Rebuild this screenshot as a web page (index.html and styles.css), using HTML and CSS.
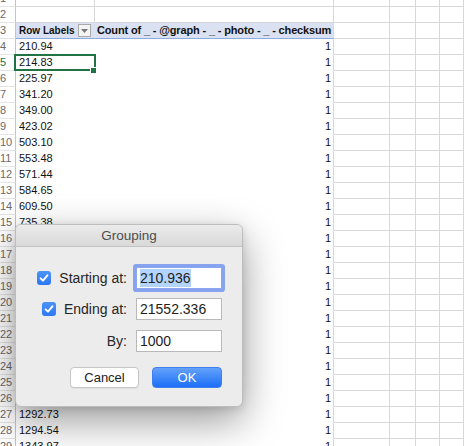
FILE: index.html
```html
<!DOCTYPE html>
<html>
<head>
<meta charset="utf-8">
<link rel="stylesheet" href="styles.css">
</head>
<body>
<div class="sheet">
  <div class="row"><div class="rh">1</div><div class="c"></div><div class="c"></div><div class="c"></div><div class="c"></div><div class="c"></div><div class="c"></div></div>
  <div class="row"><div class="rh">2</div><div class="c"></div><div class="c"></div><div class="c"></div><div class="c"></div><div class="c"></div><div class="c"></div></div>
  <div class="row"><div class="rh">3</div><div class="c ph pa"><span>Row Labels</span><span class="dd"><svg width="7" height="4" viewBox="0 0 7 4"><path d="M0 0H7L3.5 4Z" fill="#7a7a7a"/></svg></span></div><div class="c ph pb">Count of _ - @graph - _ - photo - _ - checksum</div><div class="c"></div><div class="c"></div><div class="c"></div><div class="c"></div></div>
  <div class="row"><div class="rh">4</div><div class="c pv pa">210.94</div><div class="c pv pb num">1</div><div class="c"></div><div class="c"></div><div class="c"></div><div class="c"></div></div>
  <div class="row"><div class="rh cur">5</div><div class="c pv pa sel">214.83</div><div class="c pv pb num">1</div><div class="c"></div><div class="c"></div><div class="c"></div><div class="c"></div></div>
  <div class="row"><div class="rh">6</div><div class="c pv pa">225.97</div><div class="c pv pb num">1</div><div class="c"></div><div class="c"></div><div class="c"></div><div class="c"></div></div>
  <div class="row"><div class="rh">7</div><div class="c pv pa">341.20</div><div class="c pv pb num">1</div><div class="c"></div><div class="c"></div><div class="c"></div><div class="c"></div></div>
  <div class="row"><div class="rh">8</div><div class="c pv pa">349.00</div><div class="c pv pb num">1</div><div class="c"></div><div class="c"></div><div class="c"></div><div class="c"></div></div>
  <div class="row"><div class="rh">9</div><div class="c pv pa">423.02</div><div class="c pv pb num">1</div><div class="c"></div><div class="c"></div><div class="c"></div><div class="c"></div></div>
  <div class="row"><div class="rh">10</div><div class="c pv pa">503.10</div><div class="c pv pb num">1</div><div class="c"></div><div class="c"></div><div class="c"></div><div class="c"></div></div>
  <div class="row"><div class="rh">11</div><div class="c pv pa">553.48</div><div class="c pv pb num">1</div><div class="c"></div><div class="c"></div><div class="c"></div><div class="c"></div></div>
  <div class="row"><div class="rh">12</div><div class="c pv pa">571.44</div><div class="c pv pb num">1</div><div class="c"></div><div class="c"></div><div class="c"></div><div class="c"></div></div>
  <div class="row"><div class="rh">13</div><div class="c pv pa">584.65</div><div class="c pv pb num">1</div><div class="c"></div><div class="c"></div><div class="c"></div><div class="c"></div></div>
  <div class="row"><div class="rh">14</div><div class="c pv pa">609.50</div><div class="c pv pb num">1</div><div class="c"></div><div class="c"></div><div class="c"></div><div class="c"></div></div>
  <div class="row"><div class="rh">15</div><div class="c pv pa">735.38</div><div class="c pv pb num">1</div><div class="c"></div><div class="c"></div><div class="c"></div><div class="c"></div></div>
  <div class="row"><div class="rh">16</div><div class="c pv pa">742.19</div><div class="c pv pb num">1</div><div class="c"></div><div class="c"></div><div class="c"></div><div class="c"></div></div>
  <div class="row"><div class="rh">17</div><div class="c pv pa">801.66</div><div class="c pv pb num">1</div><div class="c"></div><div class="c"></div><div class="c"></div><div class="c"></div></div>
  <div class="row"><div class="rh">18</div><div class="c pv pa">846.30</div><div class="c pv pb num">1</div><div class="c"></div><div class="c"></div><div class="c"></div><div class="c"></div></div>
  <div class="row"><div class="rh">19</div><div class="c pv pa">912.75</div><div class="c pv pb num">1</div><div class="c"></div><div class="c"></div><div class="c"></div><div class="c"></div></div>
  <div class="row"><div class="rh">20</div><div class="c pv pa">958.04</div><div class="c pv pb num">1</div><div class="c"></div><div class="c"></div><div class="c"></div><div class="c"></div></div>
  <div class="row"><div class="rh">21</div><div class="c pv pa">1003.12</div><div class="c pv pb num">1</div><div class="c"></div><div class="c"></div><div class="c"></div><div class="c"></div></div>
  <div class="row"><div class="rh">22</div><div class="c pv pa">1056.89</div><div class="c pv pb num">1</div><div class="c"></div><div class="c"></div><div class="c"></div><div class="c"></div></div>
  <div class="row"><div class="rh">23</div><div class="c pv pa">1120.47</div><div class="c pv pb num">1</div><div class="c"></div><div class="c"></div><div class="c"></div><div class="c"></div></div>
  <div class="row"><div class="rh">24</div><div class="c pv pa">1187.35</div><div class="c pv pb num">1</div><div class="c"></div><div class="c"></div><div class="c"></div><div class="c"></div></div>
  <div class="row"><div class="rh">25</div><div class="c pv pa">1215.90</div><div class="c pv pb num">1</div><div class="c"></div><div class="c"></div><div class="c"></div><div class="c"></div></div>
  <div class="row"><div class="rh">26</div><div class="c pv pa">1268.41</div><div class="c pv pb num">1</div><div class="c"></div><div class="c"></div><div class="c"></div><div class="c"></div></div>
  <div class="row"><div class="rh">27</div><div class="c pv pa">1292.73</div><div class="c pv pb num">1</div><div class="c"></div><div class="c"></div><div class="c"></div><div class="c"></div></div>
  <div class="row"><div class="rh">28</div><div class="c pv pa">1294.54</div><div class="c pv pb num">1</div><div class="c"></div><div class="c"></div><div class="c"></div><div class="c"></div></div>
  <div class="row"><div class="rh">29</div><div class="c pv pa">1343.97</div><div class="c pv pb num">1</div><div class="c"></div><div class="c"></div><div class="c"></div><div class="c"></div></div>
</div>

<div class="dialog">
  <div class="titlebar">Grouping</div>
  <div class="dbody">
    <div class="frow">
      <span class="cb"><svg width="14" height="14" viewBox="0 0 14 14"><path d="M3.6 7.3L6 9.7L10.4 4.3" fill="none" stroke="#fff" stroke-width="1.9" stroke-linecap="round" stroke-linejoin="round"/></svg></span>
      <span class="lbl">Starting at:</span>
      <div class="field focus"><span class="seltext">210.936</span></div>
    </div>
    <div class="frow r2">
      <span class="cb"><svg width="14" height="14" viewBox="0 0 14 14"><path d="M3.6 7.3L6 9.7L10.4 4.3" fill="none" stroke="#fff" stroke-width="1.9" stroke-linecap="round" stroke-linejoin="round"/></svg></span>
      <span class="lbl">Ending at:</span>
      <div class="field">21552.336</div>
    </div>
    <div class="frow r3">
      <span class="lbl">By:</span>
      <div class="field">1000</div>
    </div>
    <div class="btns">
      <div class="btn cancel">Cancel</div>
      <div class="btn ok">OK</div>
    </div>
  </div>
</div>
</body>
</html>
```
FILE: styles.css
```css
html, body {
  margin: 0;
  padding: 0;
  background: #ffffff;
}
body {
  width: 464px;
  height: 446px;
  overflow: hidden;
  position: relative;
  font-family: "Liberation Sans", Arial, sans-serif;
}
.sheet {
  margin-top: -9px;
}
.row {
  display: grid;
  grid-template-columns: 16px 79px 239px 56px 26px 24px 24px;
  height: 16px;
}
.c, .rh {
  box-sizing: border-box;
  height: 16px;
  border-right: 1px solid #d8d8d8;
  border-bottom: 1px solid #d8d8d8;
  white-space: nowrap;
  font-size: 11px;
  line-height: 15px;
  color: #111;
}
.rh {
  border-right-color: #c4c4c4;
  border-bottom-color: #e4e4e4;
  color: #6a6a6a;
  padding-left: 0;
  overflow: hidden;
}
.rh.cur {
  color: #217346;
}
.pa {
  padding-left: 3px;
}
.pv.pa {
  border-right-color: #fff;
  border-bottom-color: #fff;
}
.pv.pb {
  border-bottom-color: #fff;
}
.num {
  text-align: right;
  padding-right: 2px;
}
.ph {
  background: #d9e1f2;
  border-bottom: 1px solid #8ea9db;
  font-weight: bold;
  font-size: 10px;
}
.ph.pa {
  border-right-color: #d9e1f2;
  display: flex;
  justify-content: space-between;
  align-items: center;
  padding-right: 3px;
}
.ph.pb {
  padding-left: 2px;
  overflow: hidden;
  font-size: 11px;
  letter-spacing: -0.15px;
}
.dd {
  box-sizing: border-box;
  width: 13px;
  height: 13px;
  border: 1px solid #a9a9a9;
  background: #f4f4f4;
  display: flex;
  align-items: center;
  justify-content: center;
}
.sel {
  position: relative;
}
.sel::after {
  content: "";
  position: absolute;
  left: -2px;
  top: -1px;
  right: -2px;
  bottom: -1px;
  border: 2px solid #217346;
}
.sel::before {
  content: "";
  position: absolute;
  right: -3px;
  bottom: -4px;
  width: 5px;
  height: 5px;
  background: #217346;
  border: 1px solid #fff;
  z-index: 1;
}

/* dialog */
.dialog {
  position: absolute;
  left: 15px;
  top: 224px;
  width: 228px;
  height: 183px;
  box-sizing: border-box;
  background: #ececec;
  border: 1px solid #bdbdbd;
  border-radius: 6px;
  box-shadow: 0 14px 40px rgba(0, 0, 0, 0.4), 0 2px 8px rgba(0, 0, 0, 0.12);
  color: #262626;
  font-family: "Liberation Sans", Arial, sans-serif;
}
.titlebar {
  height: 21px;
  line-height: 21px;
  border-bottom: 1px solid #c3c3c3;
  background: linear-gradient(#ebebeb, #d9d9d9);
  border-radius: 5px 5px 0 0;
  text-align: center;
  font-size: 13.5px;
  color: #4d4d4d;
}
.dbody {
  padding-top: 20px;
}
.frow {
  display: flex;
  justify-content: flex-end;
  align-items: center;
  height: 22px;
  padding-right: 20px;
}
.frow.r2 {
  margin-top: 9px;
}
.frow.r3 {
  margin-top: 10px;
}
.cb {
  width: 14px;
  height: 14px;
  border-radius: 3px;
  background: linear-gradient(#4f93fa, #2c77f6);
  margin-right: 8px;
  display: flex;
}
.lbl {
  font-size: 14px;
  margin-right: 9px;
}
.field {
  box-sizing: border-box;
  width: 86px;
  height: 22px;
  background: #fff;
  border: 1px solid #b9b9b9;
  font-size: 14px;
  line-height: 20px;
  padding-left: 3px;
  color: #1e1e1e;
}
.field.focus {
  border-color: #8aa6ee;
  box-shadow: 0 0 0 3px #87a3f0;
  border-radius: 1px;
}
.seltext {
  background: #b3d4fd;
  padding: 1px 0;
}
.btns {
  display: flex;
  justify-content: flex-end;
  gap: 13px;
  margin-top: 15px;
  padding-right: 20px;
}
.btn {
  box-sizing: border-box;
  height: 21px;
  line-height: 19px;
  border-radius: 4px;
  text-align: center;
  font-size: 13px;
}
.cancel {
  width: 69px;
  background: #fff;
  border: 1px solid #c6c6c6;
  box-shadow: 0 1px 1px rgba(0, 0, 0, 0.06);
  color: #222;
}
.ok {
  width: 70px;
  background: linear-gradient(#64a2fb, #1d6ef7);
  border: 1px solid #3f7ff0;
  color: #fff;
}
```
